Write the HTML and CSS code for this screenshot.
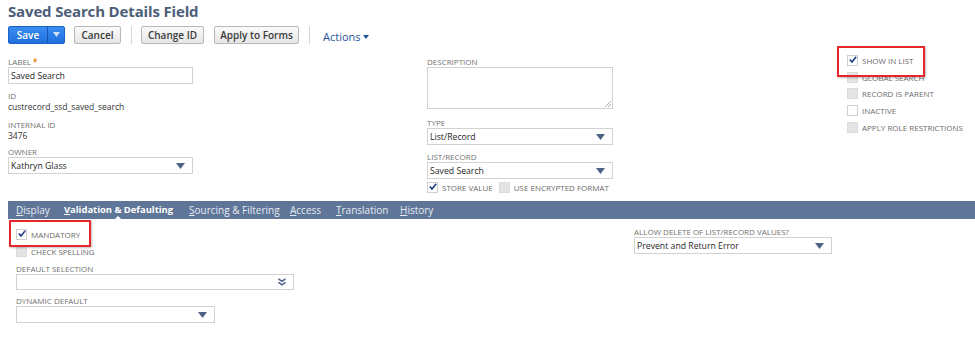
FILE: index.html
```html
<!DOCTYPE html>
<html>
<head>
<meta charset="utf-8">
<link rel="stylesheet" href="styles.css">
</head>
<body>
<div class="page">
  <h1 class="title">Saved Search Details Field</h1>
  <div class="toolbar">
    <div class="btn-save"><span class="save-main">Save</span><span class="save-arrow"><svg width="7" height="5" viewBox="0 0 7 5"><path d="M0 0h7L3.5 5z" fill="#cfe0f7"/></svg></span></div>
    <button class="btn btn-cancel">Cancel</button>
    <span class="divider"></span>
    <button class="btn btn-change">Change ID</button>
    <button class="btn btn-apply">Apply to Forms</button>
    <span class="divider d2"></span>
    <span class="actions">Actions <svg width="6" height="4" viewBox="0 0 6 4"><path d="M0 0h6L3 4z" fill="#255599"/></svg></span>
  </div>

  <div class="main">
    <div class="col col-left">
      <div class="lbl">LABEL <span class="req">*</span></div>
      <div class="input w184"><span>Saved Search</span></div>
      <div class="lbl gap6">ID</div>
      <div class="val">custrecord_ssd_saved_search</div>
      <div class="lbl gap7">INTERNAL ID</div>
      <div class="val">3476</div>
      <div class="lbl gap5">OWNER</div>
      <div class="input select w184"><span>Kathryn Glass</span><svg class="arr" width="9" height="6" viewBox="0 0 9 6"><path d="M0 0h9L4.5 6z" fill="#4d6285"/></svg></div>
    </div>
    <div class="col col-mid">
      <div class="lbl">DESCRIPTION</div>
      <div class="textarea"><svg class="grip" width="6" height="6" viewBox="0 0 6 6"><path d="M6 0L0 6M6 3L3 6" stroke="#999" stroke-width="0.8"/></svg></div>
      <div class="lbl gap8">TYPE</div>
      <div class="input select w185"><span>List/Record</span><svg class="arr" width="9" height="6" viewBox="0 0 9 6"><path d="M0 0h9L4.5 6z" fill="#4d6285"/></svg></div>
      <div class="lbl gap6">LIST/RECORD</div>
      <div class="input select w185"><span>Saved Search</span><svg class="arr" width="9" height="6" viewBox="0 0 9 6"><path d="M0 0h9L4.5 6z" fill="#4d6285"/></svg></div>
      <div class="cbrow">
        <span class="cb checked"><svg width="10" height="9" viewBox="0 0 10 9"><path d="M1 4.5l2.7 3L9 1" stroke="#1f3f80" stroke-width="2" fill="none"/></svg></span>
        <span class="cbl">STORE VALUE</span>
        <span class="cb disabled sp"></span>
        <span class="cbl">USE ENCRYPTED FORMAT</span>
      </div>
    </div>
    <div class="col col-right">
      <div class="chk hl hl-top">
        <span class="cb checked"><svg width="10" height="9" viewBox="0 0 10 9"><path d="M1 4.5l2.7 3L9 1" stroke="#1f3f80" stroke-width="2" fill="none"/></svg></span>
        <span class="cbl">SHOW IN LIST</span>
      </div>
      <div class="chk"><span class="cb disabled"></span><span class="cbl">GLOBAL SEARCH</span></div>
      <div class="chk"><span class="cb disabled"></span><span class="cbl">RECORD IS PARENT</span></div>
      <div class="chk"><span class="cb"></span><span class="cbl">INACTIVE</span></div>
      <div class="chk"><span class="cb disabled"></span><span class="cbl">APPLY ROLE RESTRICTIONS</span></div>
    </div>
  </div>

  <div class="tabs">
    <span class="tab t1"><u>D</u>isplay</span>
    <span class="tab active"><u>V</u>alidation &amp; Defaulting</span>
    <span class="tab t3"><u>S</u>ourcing &amp; Filtering</span>
    <span class="tab t4"><u>A</u>ccess</span>
    <span class="tab t5"><u>T</u>ranslation</span>
    <span class="tab t6"><u>H</u>istory</span>
  </div>

  <div class="lower">
    <div class="col col-l2">
      <div class="chk hl hl-mand">
        <span class="cb checked"><svg width="10" height="9" viewBox="0 0 10 9"><path d="M1 4.5l2.7 3L9 1" stroke="#1f3f80" stroke-width="2" fill="none"/></svg></span>
        <span class="cbl">MANDATORY</span>
      </div>
      <div class="chk"><span class="cb disabled"></span><span class="cbl">CHECK SPELLING</span></div>
      <div class="lbl gap3">DEFAULT SELECTION</div>
      <div class="input select w277 thin"><span></span><svg class="arr2" width="8" height="8" viewBox="0 0 8 8"><path d="M0.5 0.8L4 3.3L7.5 0.8M0.5 4.3L4 6.8L7.5 4.3" stroke="#4d6285" stroke-width="1.6" fill="none"/></svg></div>
      <div class="lbl gap5">DYNAMIC DEFAULT</div>
      <div class="input select w198"><span></span><svg class="arr" width="9" height="6" viewBox="0 0 9 6"><path d="M0 0h9L4.5 6z" fill="#4d6285"/></svg></div>
    </div>
    <div class="col col-r2">
      <div class="lbl">ALLOW DELETE OF LIST/RECORD VALUES?</div>
      <div class="input select w197"><span>Prevent and Return Error</span><svg class="arr" width="9" height="6" viewBox="0 0 9 6"><path d="M0 0h9L4.5 6z" fill="#4d6285"/></svg></div>
    </div>
  </div>
</div>
</body>
</html>
```

FILE: styles.css
```css
* { box-sizing: border-box; }
html, body { margin: 0; padding: 0; background: #fff; }
body { font-family: "Open Sans", "Noto Sans", sans-serif; color: #262626; }
.page { width: 975px; height: 342px; overflow: hidden; }

.title {
  margin: 0;
  padding: 1px 0 0 8px;
  height: 25px;
  font-size: 15px;
  line-height: 20px;
  font-weight: 700;
  color: #4d5e78;
  letter-spacing: -0.15px;
}

.toolbar {
  display: flex;
  align-items: center;
  padding-left: 8px;
  height: 19px;
}
.btn-save {
  display: flex;
  height: 18px;
  border-radius: 2px;
  overflow: hidden;
  background: linear-gradient(#3b8cf1, #1e6fdc);
  border: 1px solid #1c63c7;
}
.save-main {
  width: 38px;
  font-size: 10px;
  font-weight: 600;
  color: #fff;
  line-height: 16px;
  text-align: center;
}
.save-arrow {
  width: 17px;
  border-left: 1px solid #1655b0;
  display: flex;
  align-items: center;
  justify-content: center;
}
.btn {
  height: 18px;
  padding: 0;
  border: 1px solid #b8b8b8;
  border-radius: 2px;
  background: linear-gradient(#fafafa, #e6e6e6);
  font-family: "Open Sans", "Noto Sans", sans-serif;
  font-size: 10px;
  font-weight: 600;
  color: #3a3a3a;
  line-height: 16px;
}
.btn-cancel { width: 47px; margin-left: 9px; }
.btn-change { width: 63px; }
.btn-apply { width: 85px; margin-left: 10px; }
.divider {
  width: 1px;
  height: 18px;
  background: #d6d6d6;
  margin: 0 9px 0 10px;
}
.d2 { margin: 0 13px 0 10px; }
.actions {
  font-size: 11px;
  color: #255599;
  padding-top: 4px;
  display: flex;
  align-items: center;
  gap: 2px;
}
.actions svg { margin-top: 1px; }

.main {
  display: grid;
  grid-template-columns: 419px 420px 1fr;
  padding-left: 8px;
  margin-top: 12px;
  height: 145px;
}
.col { display: flex; flex-direction: column; align-items: flex-start; }

.lbl {
  font-size: 8px;
  line-height: 11px;
  color: #707070;
  white-space: nowrap;
}
.req { color: #e58a1f; font-weight: 700; }
.val {
  font-size: 8.5px;
  line-height: 11px;
  color: #333;
}
.gap3 { margin-top: 3px; }
.gap5 { margin-top: 5px; }
.gap6 { margin-top: 6px; }
.gap7 { margin-top: 7px; }
.gap8 { margin-top: 8px; }

.input {
  height: 17px;
  border: 1px solid #d2d2d2;
  display: flex;
  align-items: center;
  justify-content: space-between;
  padding: 0 7px 0 2px;
  font-size: 8.7px;
  color: #262626;
  background: #fff;
}
.w184 { width: 185px; }
.w185 { width: 186px; }
.w277 { width: 278px; }
.w198 { width: 199px; }
.w197 { width: 198px; }
.arr { margin-top: 1px; }

.textarea {
  width: 186px;
  height: 42px;
  border: 1px solid #d2d2d2;
  position: relative;
}
.grip { position: absolute; right: 1px; bottom: 1px; }

.cb {
  width: 11px;
  height: 11px;
  border: 1px solid #cfcfcf;
  background: #fff;
  display: inline-flex;
  align-items: flex-start;
  justify-content: center;
  flex: none;
}
.cb.checked svg { margin-top: -1px; margin-left: 1px; }
.cb.disabled { background: #e4e4e4; border-color: #dcdcdc; }
.cbl {
  font-size: 8px;
  color: #6b6b6b;
  margin-left: 4px;
  white-space: nowrap;
}
.cbrow {
  display: flex;
  align-items: center;
  margin-top: 2px;
  height: 12px;
}
.cb.sp { margin-left: 6px; }

.col-right { margin-top: -4px; }
.chk {
  display: flex;
  align-items: center;
  height: 16.75px;
}
.hl { position: relative; }
.hl::before {
  content: "";
  position: absolute;
  border: 2px solid #e5262b;
  box-shadow: 1px 1px 2px rgba(0,0,0,0.25);
}
.hl-top::before { left: -10px; top: -6px; width: 84px; height: 27px; }
.hl-mand::before { left: -7px; top: -6px; width: 78px; height: 23px; }

.tabs {
  margin-left: 8px;
  height: 18px;
  background: #5f7698;
  position: relative;
  font-size: 10px;
  color: #e6ebf2;
}
.tab { position: absolute; top: 2px; line-height: 14px; white-space: nowrap; }
.tab u { text-decoration-thickness: 1px; text-underline-offset: 1px; }
.t1 { left: 8px; }
.active { left: 56px; font-weight: 700; color: #fff; font-size: 9.4px; }
.active::after {
  content: "";
  position: absolute;
  left: 51px;
  top: 13px;
  border-left: 3px solid transparent;
  border-right: 3px solid transparent;
  border-bottom: 3px solid #fff;
}
.t3 { left: 181px; }
.t4 { left: 282px; }
.t5 { left: 328px; }
.t6 { left: 392px; }

.lower {
  display: grid;
  grid-template-columns: 618px 1fr;
  padding-left: 16px;
  margin-top: 7px;
}
.col-r2 { padding-top: 0; }
.thin { height: 16px; }
```
